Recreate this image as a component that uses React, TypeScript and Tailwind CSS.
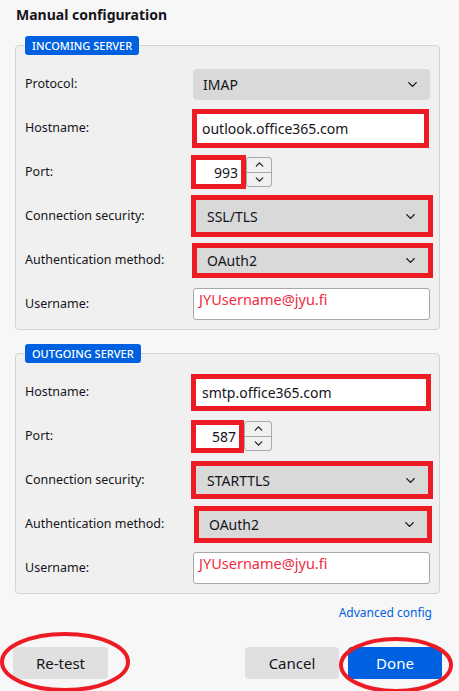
import { ChevronDown, ChevronUp } from 'lucide-react'
import type { ReactNode } from 'react'

const FONT = 'font-["Noto_Sans","Open_Sans",sans-serif]'

function Row({ label, children }: { label: string; children: ReactNode }) {
    return (
        <div className="flex items-center h-[44px]">
            <span className="w-[166px] shrink-0 text-[12.5px] text-[#15141a]">{label}</span>
            {children}
        </div>
    )
}

function Select({ value, className }: { value: string; className: string }) {
    return (
        <div className={`flex items-center justify-between bg-[#d9d9d9] pl-[10px] pr-[10px] text-[14px] text-[#15141a] ${className}`}>
            <span>{value}</span>
            <ChevronDown size={15} strokeWidth={2.2} />
        </div>
    )
}

function TextBox({ value, className }: { value: string; className: string }) {
    return (
        <div className={`flex items-center bg-white pl-[5px] text-[14px] text-[#15141a] ${className}`}>
            {value}
        </div>
    )
}

function Port({ value, boxClass, spinClass }: { value: string; boxClass: string; spinClass: string }) {
    return (
        <div className="flex items-center">
            <div className={`flex items-center justify-end bg-white pr-[3px] text-[14px] text-[#15141a] border-[5px] border-[#ed1c24] ${boxClass}`}>
                {value}
            </div>
            <div className={`flex flex-col border border-[#a8a8a8] rounded-[3px] bg-[#f0f0f0] ${spinClass}`}>
                <div className="flex-1 flex items-center justify-center border-b border-[#a8a8a8] text-[#15141a]">
                    <ChevronUp size={13} strokeWidth={2} />
                </div>
                <div className="flex-1 flex items-center justify-center text-[#15141a]">
                    <ChevronDown size={13} strokeWidth={2} />
                </div>
            </div>
        </div>
    )
}

function Username() {
    return (
        <div className="ml-[2px] w-[237px] h-[32px] bg-white border border-[#a8a8a8] rounded-[3px] pl-[5px] text-[14.5px] leading-[20px] text-[#ef2b3f]">
            JYUsername@jyu.fi
        </div>
    )
}

function Section({ title, children }: { title: string; children: ReactNode }) {
    return (
        <fieldset className="min-w-0 border border-[#d4d4d4] rounded-[4px] bg-[#f0f0f0] pl-[9px] pr-[6px] pb-[3px]">
            <legend className="bg-[#0061e0] text-white text-[11px] font-medium px-[7px] h-[19px] leading-[19px] rounded-[3px]">
                {title}
            </legend>
            <div className="flex flex-col pt-[7px]">{children}</div>
        </fieldset>
    )
}

export default function App() {
    return (
        <div className={`relative w-[459px] h-[691px] bg-[#f7f7f7] overflow-hidden ${FONT}`}>
            <div className="flex flex-col pl-[15px] pr-[19px]">
                <h1 className="pl-[1px] pt-[4px] h-[36px] text-[14px] font-bold text-[#15141a]">Manual configuration</h1>

                <Section title="INCOMING SERVER">
                    <Row label="Protocol:">
                        <Select value="IMAP" className="ml-[2px] w-[237px] h-[31px] rounded-[4px]" />
                    </Row>
                    <Row label="Hostname:">
                        <TextBox value="outlook.office365.com" className="ml-[1px] w-[237px] h-[39px] border-[5px] border-[#ed1c24]" />
                    </Row>
                    <Row label="Port:">
                        <Port value="993" boxClass="w-[55px] h-[34px]" spinClass="w-[26px] h-[30px]" />
                    </Row>
                    <Row label="Connection security:">
                        <Select value="SSL/TLS" className="w-[242px] h-[42px] border-[5px] border-[#ed1c24] pl-[11px] pr-[9px]" />
                    </Row>
                    <Row label="Authentication method:">
                        <Select value="OAuth2" className="ml-[1px] w-[241px] h-[35px] border-[5px] border-[#ed1c24] pl-[10px] pr-[9px]" />
                    </Row>
                    <Row label="Username:">
                        <Username />
                    </Row>
                </Section>

                <div className="h-[14px]" />

                <Section title="OUTGOING SERVER">
                    <Row label="Hostname:">
                        <TextBox value="smtp.office365.com" className="w-[240px] h-[37px] border-[5px] border-[#ed1c24] pl-[6px]" />
                    </Row>
                    <Row label="Port:">
                        <Port value="587" boxClass="w-[53px] h-[33px]" spinClass="w-[28px] h-[30px]" />
                    </Row>
                    <Row label="Connection security:">
                        <Select value="STARTTLS" className="w-[242px] h-[38px] border-[5px] border-[#ed1c24] pl-[11px] pr-[9px]" />
                    </Row>
                    <Row label="Authentication method:">
                        <Select value="OAuth2" className="ml-[3px] w-[238px] h-[37px] border-[5px] border-[#ed1c24] pl-[8px] pr-[9px]" />
                    </Row>
                    <Row label="Username:">
                        <Username />
                    </Row>
                </Section>

                <div className="flex justify-end pr-[8px] pt-[10px] h-[40px]">
                    <span className="text-[12px] text-[#0061e0]">Advanced config</span>
                </div>

                <div className="flex items-center mt-[13px] -ml-[2px] -mr-[2px]">
                    <button className="w-[95px] h-[32px] rounded-[4px] bg-[#e0e0e0] text-[15px] text-[#15141a]">Re-test</button>
                    <div className="flex-1" />
                    <button className="w-[94px] h-[32px] rounded-[4px] bg-[#e0e0e0] text-[15px] text-[#15141a]">Cancel</button>
                    <button className="ml-[9px] w-[94px] h-[32px] rounded-[4px] bg-[#0061e0] text-[15px] text-white">Done</button>
                </div>
            </div>

            {/* red annotation ellipses */}
            <svg className="absolute inset-0 pointer-events-none" width="459" height="691" viewBox="0 0 459 691">
                <ellipse cx="65" cy="662" rx="63" ry="28" fill="none" stroke="#ed1c24" strokeWidth="4" />
                <ellipse cx="396" cy="665" rx="55" ry="26" fill="none" stroke="#ed1c24" strokeWidth="4" />
            </svg>
        </div>
    )
}
